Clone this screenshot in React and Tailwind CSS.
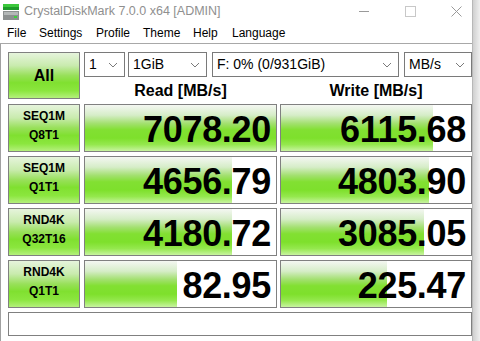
import React from "react";

const BAR =
  "linear-gradient(to bottom, #f4f7f2 0%, #d6edc8 22%, #a3e070 40%, #82e032 54%, #7ee02c 72%, #95e84e 86%, #c8f4a0 100%)";
const LABEL =
  "linear-gradient(to bottom, #e6f4dc 0%, #c9ebae 28%, #98e05a 50%, #80e030 66%, #8be63e 84%, #b4f07c 100%)";

const rows = [
  { l1: "SEQ1M", l2: "Q8T1", read: "7078.20", rp: 100, write: "6115.68", wp: 80 },
  { l1: "SEQ1M", l2: "Q1T1", read: "4656.79", rp: 77, write: "4803.90", wp: 78 },
  { l1: "RND4K", l2: "Q32T16", read: "4180.72", rp: 77, write: "3085.05", wp: 75 },
  { l1: "RND4K", l2: "Q1T1", read: "82.95", rp: 48, write: "225.47", wp: 56 },
];

const Chevron = () => (
  <svg width="10" height="6" viewBox="0 0 10 6" className="shrink-0">
    <polyline points="1,1 5,5 9,1" fill="none" stroke="#7a7a7a" strokeWidth="1" />
  </svg>
);

function Select({ w, text }) {
  return (
    <div
      className={`${w} h-[25px] border border-[#7a7a7a] bg-white flex items-center justify-between pl-[4px] pr-[6px] text-[14px] text-black`}
    >
      <span>{text}</span>
      <Chevron />
    </div>
  );
}

function Value({ value, pct, w }) {
  return (
    <div className={`${w} h-[48px] relative border border-[#808080] bg-white overflow-hidden`}>
      <div className="absolute left-0 top-0 bottom-0" style={{ width: pct + "%", background: BAR }} />
      <div className="relative h-full flex items-center justify-end pr-[5px] pt-[3px] text-[36px] font-bold text-black tracking-[-0.3px]">
        {value}
      </div>
    </div>
  );
}

export default function App() {
  return (
    <div
      className="w-[480px] h-[341px] flex bg-white overflow-hidden"
      style={{ fontFamily: '"Liberation Sans", Arial, sans-serif' }}
    >
      <div className="w-[473px] h-full flex flex-col bg-white border-r border-[#b8b8b8]">
        {/* title bar */}
        <div className="h-[22px] flex items-center">
          <svg width="16" height="16" viewBox="0 0 16 16" className="ml-[3px] mt-[2px]">
            <rect x="0" y="0" width="16" height="6" fill="#3cc83c" />
            <rect x="0" y="3" width="16" height="3" fill="#1e9a2a" />
            <rect x="0" y="7" width="16" height="9" fill="#8c9090" />
            <rect x="1" y="8" width="14" height="3" fill="#b4b8b8" />
            <rect x="11" y="12" width="3" height="2" fill="#3cd23c" />
          </svg>
          <span className="ml-[5px] text-[12.5px] text-[#8f8f8f]">CrystalDiskMark 7.0.0 x64 [ADMIN]</span>
          <div className="ml-auto flex items-center">
            <svg width="11" height="11" viewBox="0 0 11 11" className="mr-[35px]">
              <line x1="0" y1="5.5" x2="10" y2="5.5" stroke="#9a9a9a" strokeWidth="1" />
            </svg>
            <svg width="11" height="11" viewBox="0 0 11 11" className="mr-[35px]">
              <rect x="0.5" y="0.5" width="10" height="10" fill="none" stroke="#c8c8c8" strokeWidth="1" />
            </svg>
            <svg width="11" height="11" viewBox="0 0 11 11" className="mr-[10px]">
              <path d="M0.5 0.5 L10.5 10.5 M10.5 0.5 L0.5 10.5" stroke="#9a9a9a" strokeWidth="1" />
            </svg>
          </div>
        </div>
        {/* menu */}
        <div className="h-[22px] flex items-center text-[12px] text-black border-b border-[#a8a8a8] pl-[7px]">
          <span className="w-[32px]">File</span>
          <span className="w-[57px]">Settings</span>
          <span className="w-[47px]">Profile</span>
          <span className="w-[50px]">Theme</span>
          <span className="w-[39px]">Help</span>
          <span>Language</span>
        </div>
        {/* content */}
        <div className="flex-1 flex flex-col border-l border-[#a0a0a0] pl-[7px] pt-[8px]">
          <div className="flex h-[47px]">
            <div
              className="w-[72px] h-[47px] border border-[#808080] flex items-center justify-center text-[16px] font-bold text-black"
              style={{ background: LABEL }}
            >
              All
            </div>
            <div className="ml-[4px] flex flex-col">
              <div className="flex">
                <Select w="w-[41px]" text="1" />
                <div className="ml-[3px]">
                  <Select w="w-[79px]" text="1GiB" />
                </div>
                <div className="ml-[5px]">
                  <Select w="w-[187px]" text="F: 0% (0/931GiB)" />
                </div>
                <div className="ml-[5px]">
                  <Select w="w-[68px]" text="MB/s" />
                </div>
              </div>
              <div className="flex h-[22px] items-center pt-[6px] text-[16px] font-bold text-black">
                <div className="w-[193px] text-center">Read [MB/s]</div>
                <div className="ml-[3px] w-[192px] text-center">Write [MB/s]</div>
              </div>
            </div>
          </div>
          <div className="mt-[5px] flex flex-col gap-[4px]">
            {rows.map((r, i) => (
              <div key={i} className="flex">
                <div
                  className="w-[72px] h-[48px] border border-[#808080] flex flex-col items-center justify-center pb-[5px] text-[12px] font-bold text-black leading-[19px]"
                  style={{ background: LABEL }}
                >
                  <span>{r.l1}</span>
                  <span>{r.l2}</span>
                </div>
                <div className="ml-[4px]">
                  <Value value={r.read} pct={r.rp} w="w-[193px]" />
                </div>
                <div className="ml-[3px]">
                  <Value value={r.write} pct={r.wp} w="w-[192px]" />
                </div>
              </div>
            ))}
          </div>
          <div className="mt-[4px] w-[464px] h-[24px] border border-[#808080] bg-white" />
        </div>
      </div>
      <div className="flex-1 h-full bg-gradient-to-r from-[#d0d0d0] to-[#efefef]" />
    </div>
  );
}
